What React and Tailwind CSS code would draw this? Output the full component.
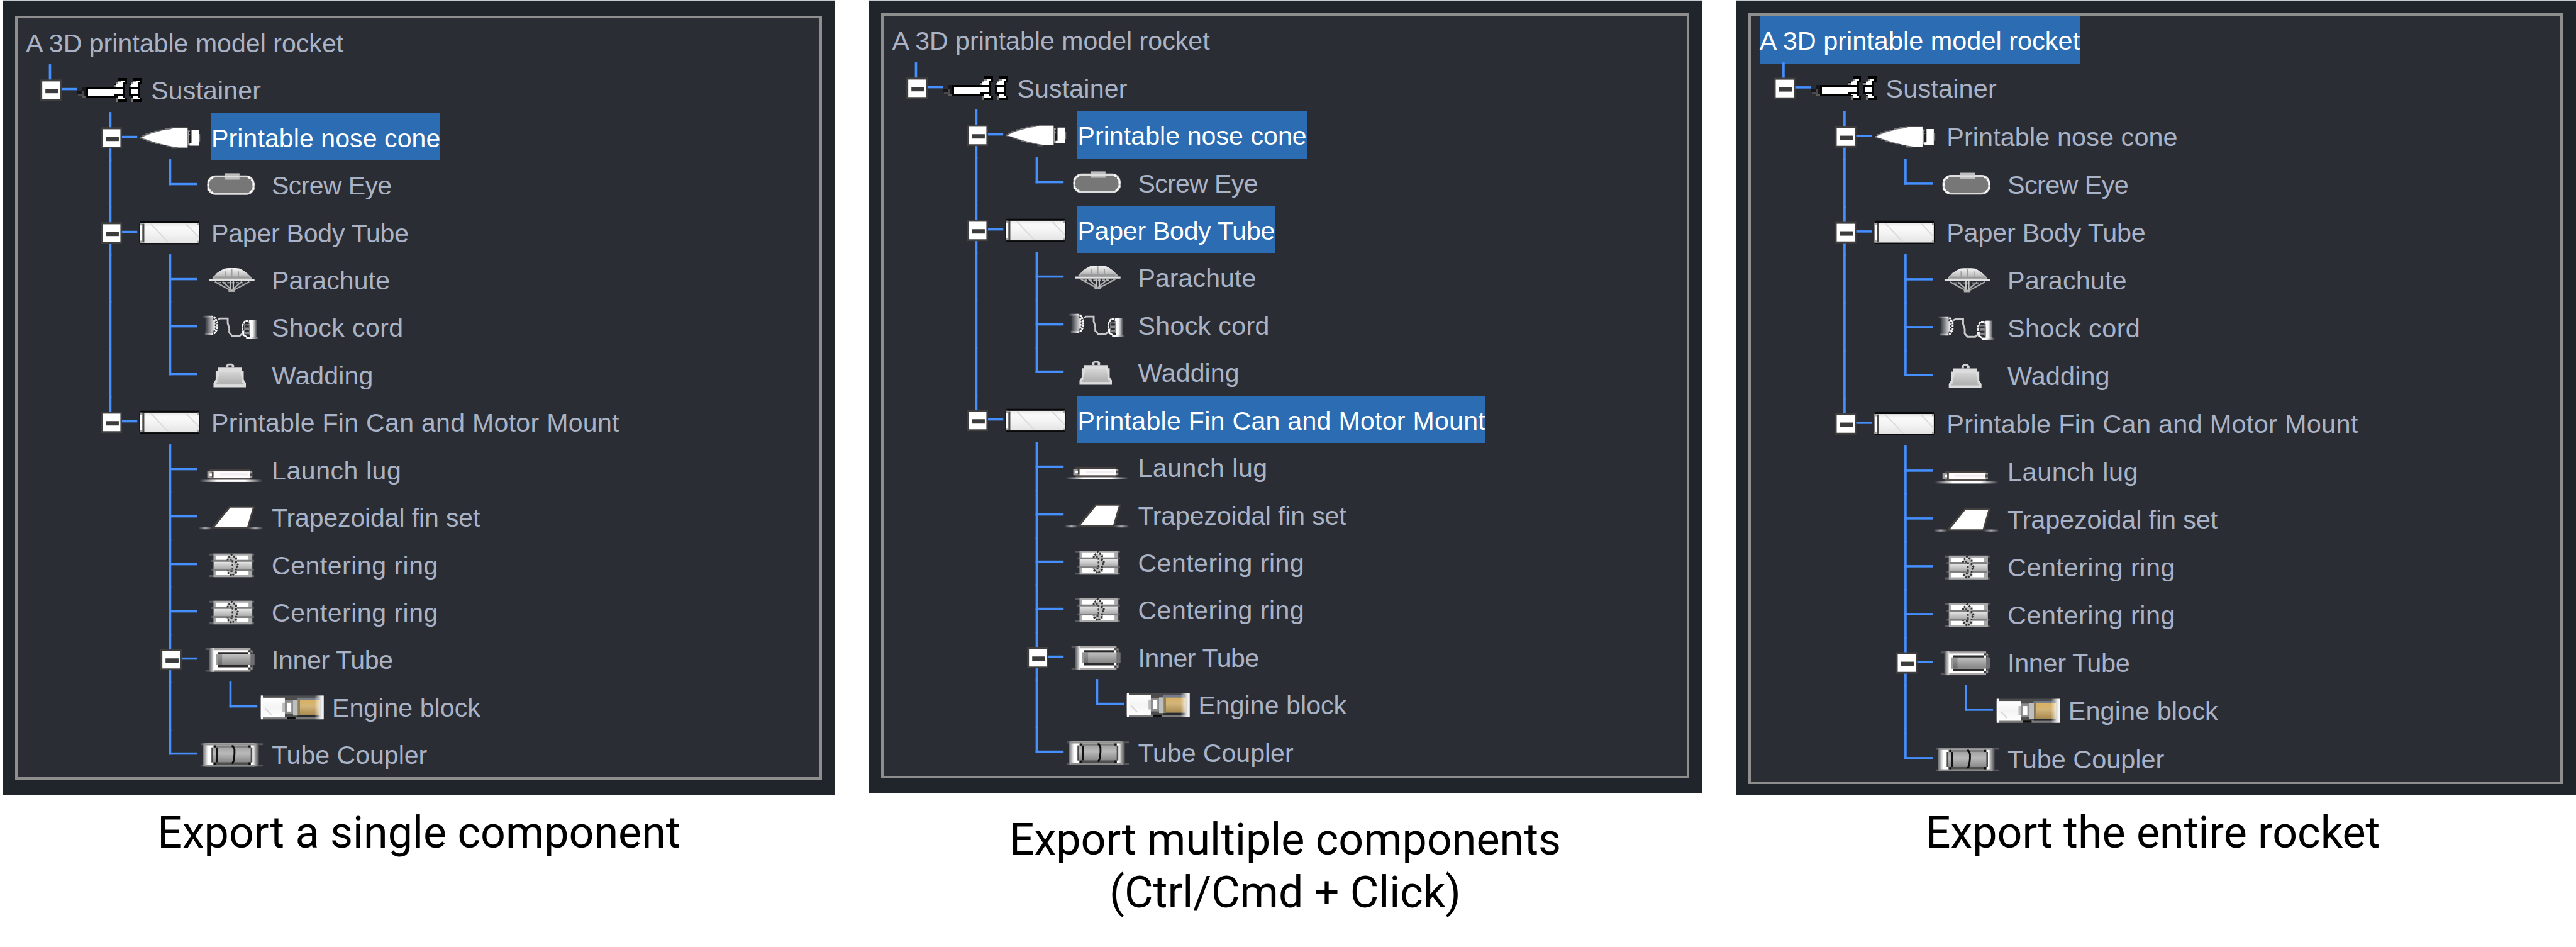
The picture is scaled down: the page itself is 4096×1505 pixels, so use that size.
import React from "react";

/* ---------- component icons ---------- */

function IconBox({ view, children }) {
  return (
    <svg viewBox={view} className="h-[79px] w-[113px] shrink-0 overflow-visible" aria-hidden="true">
      {children}
    </svg>
  );
}

function Fin() {
  return (
    <g shapeRendering="crispEdges">
      <path d="M231 60H273V92H262V104H253V147H262V157H273V179H231V168H221V147H210V138H253V104H210V92H221V82H231Z" fill="#000" />
      <path d="M231 72H242V82H231ZM221 82H231V92H221ZM210 94H221V104H210Z" fill="#8a8a8a" />
      <path d="M242 72H262V82H253V104H221V92H231V82H242Z" fill="#fff" />
      <path d="M221 147H253V157H262V168H242V157H231V152H221Z" fill="#fff" />
      <path d="M221 157H231V168H221ZM221 168H231V179H221Z" fill="#77736f" />
      <path d="M231 157H242V168H231Z" fill="#fff" />
    </g>
  );
}

function SustainerIcon() {
  return (
    <IconBox view="23 -3 339 237">
      <g shapeRendering="crispEdges">
        <path d="M25 124H47V104H69V147H58V139H25Z" fill="#15171a" />
        <path d="M47 124H58V147H47ZM30 139H47V147H30Z" fill="#4c4b4b" />
        <path d="M47 147H69V157H47Z" fill="#5d5a58" />
        <rect x="69" y="104" width="193" height="53" fill="#000" />
        <rect x="80" y="114" width="173" height="33" fill="#fff" />
      </g>
      <Fin />
      <g transform="translate(76 0)">
        <Fin />
      </g>
      <g shapeRendering="crispEdges">
        <rect x="200" y="114" width="53" height="24" fill="#fff" />
        <rect x="285" y="104" width="53" height="43" fill="#000" />
        <rect x="295" y="114" width="33" height="23" fill="#fff" />
      </g>
    </IconBox>
  );
}

function NoseConeIcon() {
  return (
    <IconBox view="324 234 339 237">
      <path d="M490 303H577V309H490ZM495 405H525V412H495Z" fill="#4d4b49" />
      <path d="M340 352H350V343H366V335H388V327H410V321H436V315H462V309H577V405H495V400H470V394H440V388H414V381H392V374H370V366H352V361H340Z" fill="#77787a" />
      <path d="M344 357L366 346L392 336L420 328L450 320L490 314L505 309H576V405H530L490 398L450 389L420 381L392 372L366 363Z" fill="#fff" />
      <rect x="577" y="320" width="10" height="74" fill="#9a9a9a" />
      <path d="M587 328V388" stroke="#1b1b1b" strokeWidth="9" strokeDasharray="10 6 44 6" />
      <path d="M596 318H632V396H586V384H596Z" fill="#fff" />
      <rect x="632" y="338" width="7" height="38" fill="#77787a" />
    </IconBox>
  );
}

function ScrewEyeIcon() {
  return (
    <IconBox view="625 471 339 237">
      <rect x="679" y="551" width="226" height="87" rx="36" fill="#777" stroke="#dedede" strokeWidth="10" />
      <path d="M679 620V575L705 553M879 553L905 578V615L880 636M705 636L684 618" fill="none" stroke="#fff" strokeWidth="9" strokeDasharray="12 9" />
      <rect x="760" y="535" width="75" height="32" fill="#bdbdbd" />
      <rect x="760" y="547" width="75" height="9" fill="#dedede" />
    </IconBox>
  );
}

function BodyTubeIcon() {
  return (
    <IconBox view="324 708 339 237">
      <defs>
        <linearGradient id="tubeShade" x1="0" y1="0" x2="0" y2="1">
          <stop offset="0" stopColor="#e6e6e6" />
          <stop offset="0.2" stopColor="#fafafa" />
          <stop offset="0.55" stopColor="#f3f3f3" />
          <stop offset="1" stopColor="#e4e4e4" />
        </linearGradient>
      </defs>
      <path d="M340 773H632V783H637V881H632V888H340V881H335V783H340Z" fill="#08090a" />
      <rect x="338" y="783" width="294" height="98" fill="url(#tubeShade)" />
      <path d="M392 785L480 879M568 785L631 852" stroke="#dadada" strokeWidth="6" />
      <rect x="340" y="794" width="10" height="76" fill="#fff" />
      <rect x="350" y="785" width="10" height="94" fill="#4a4a4a" />
      <path d="M338 783H348V794H338ZM338 870H348V881H338ZM623 783H632V793H623ZM623 871H632V881H623Z" fill="#a4a4a4" />
    </IconBox>
  );
}

function ParachuteIcon() {
  return (
    <IconBox view="25 -15 339 237">
      <defs>
        <linearGradient id="canopy" x1="0" y1="0" x2="0" y2="1">
          <stop offset="0" stopColor="#f4f4f4" />
          <stop offset="0.5" stopColor="#cfcfcf" />
          <stop offset="1" stopColor="#a3a3a3" />
        </linearGradient>
      </defs>
      <path d="M100 103V94L112 84L122 72L142 60L160 50L178 48H218L236 50L254 60L272 72L284 84L295 94V103Z" fill="url(#canopy)" />
      <path d="M166 96V64M197 96V52M230 96V64" stroke="#9d9d9d" strokeWidth="5" />
      <path d="M112 94H284" stroke="#9a9a9a" strokeWidth="8" />
      <path d="M84 103H310V113H84Z" fill="#e2e2e2" />
      <path d="M112 116L192 160M150 116L194 155M246 116L200 155M284 116L202 160" fill="none" stroke="#a9a9a9" strokeWidth="7" />
      <path d="M190 113V158M204 113V158" stroke="#c4c4c4" strokeWidth="7" />
      <path d="M130 121H265" stroke="#b8b8b8" strokeWidth="6" strokeDasharray="14 8" />
      <rect x="180" y="155" width="32" height="12" fill="#b0b0b0" />
    </IconBox>
  );
}

function ShockCordIcon() {
  return (
    <IconBox view="25 222 339 237">
      <defs>
        <linearGradient id="spoolLeft" x1="0" x2="1">
          <stop offset="0" stopColor="#fff" stopOpacity="0.05" />
          <stop offset="0.5" stopColor="#fff" stopOpacity="0.5" />
          <stop offset="1" stopColor="#fff" />
        </linearGradient>
        <linearGradient id="spoolRight" x1="0" x2="1">
          <stop offset="0" stopColor="#fff" />
          <stop offset="0.4" stopColor="#f2f2f2" />
          <stop offset="1" stopColor="#fff" stopOpacity="0.1" />
        </linearGradient>
      </defs>
      <path d="M52 287H104V297H52ZM62 372H104V382H62Z" fill="url(#spoolLeft)" />
      <path d="M64 297H105V307H115V362H105V372H64Z" fill="url(#spoolLeft)" />
      <path d="M105 302L116 318V352L104 378" fill="none" stroke="#3a3b40" strokeWidth="9" strokeDasharray="8 8" />
      <path d="M108 292L124 318V354L108 378" fill="none" stroke="#fff" strokeWidth="9" strokeDasharray="11 3" />
      <path d="M127 306L138 301H176V325L184 350V372L198 388H236L250 376" fill="none" stroke="#c9c9c9" strokeWidth="9" />
      <path d="M250 376V336L262 314H286V340" fill="none" stroke="#f2f2f2" strokeWidth="9" strokeDasharray="14 3" />
      <rect x="288" y="308" width="34" height="86" fill="url(#spoolRight)" />
      <rect x="258" y="330" width="30" height="54" fill="#85868a" />
      <path d="M272 336V384" stroke="#2a2b30" strokeWidth="20" strokeDasharray="10 12" />
      <path d="M254 362V384L270 392" fill="none" stroke="#fff" strokeWidth="8" />
      <rect x="268" y="392" width="62" height="12" fill="url(#spoolRight)" />
    </IconBox>
  );
}

function WaddingIcon() {
  return (
    <IconBox view="25 459 339 237">
      <defs>
        <linearGradient id="weight" x1="0" y1="0" x2="0" y2="1">
          <stop offset="0" stopColor="#d4d4d4" />
          <stop offset="1" stopColor="#b2b2b2" />
        </linearGradient>
      </defs>
      <path d="M168 545V532L178 524H198L208 532V545H196V533H180V545Z" fill="#d2d2d2" />
      <path d="M127 545H246V560H256V604L267 622V643H105V622L116 604V560H127Z" fill="#dcdcdc" />
      <path d="M136 566H238L248 606V622H124V606Z" fill="url(#weight)" />
      <rect x="116" y="620" width="140" height="9" fill="#b4b4b4" />
    </IconBox>
  );
}

function LaunchLugIcon() {
  return (
    <IconBox view="25 933 339 237">
      <defs>
        <linearGradient id="ground" x1="0" x2="1">
          <stop offset="0" stopColor="#fff" stopOpacity="0" />
          <stop offset="0.28" stopColor="#fff" />
          <stop offset="0.72" stopColor="#fff" />
          <stop offset="1" stopColor="#fff" stopOpacity="0" />
        </linearGradient>
      </defs>
      <rect x="85" y="1052" width="205" height="10" fill="#45413f" />
      <rect x="85" y="1094" width="205" height="10" fill="#55504d" />
      <rect x="74" y="1062" width="225" height="32" fill="#a29e9c" />
      <rect x="105" y="1062" width="182" height="32" fill="#fdfbfc" />
      <rect x="138" y="1072" width="140" height="10" fill="#f1edf0" />
      <path d="M84 1072H92V1084H84ZM96 1064H105V1092H96ZM287 1072H299V1084H287Z" fill="#4a4644" />
      <rect x="85" y="1072" width="12" height="12" fill="#fff" />
      <rect x="35" y="1104" width="316" height="11" fill="url(#ground)" />
    </IconBox>
  );
}

function FinSetIcon() {
  return (
    <IconBox view="25 1170 339 237">
      <defs>
        <linearGradient id="groundDim" x1="0" x2="1">
          <stop offset="0" stopColor="#fff" stopOpacity="0.05" />
          <stop offset="0.5" stopColor="#fff" stopOpacity="0.6" />
          <stop offset="1" stopColor="#fff" stopOpacity="0.1" />
        </linearGradient>
      </defs>
      <path d="M184 1237H310V1246L280 1350H98V1340Z" fill="#45413f" />
      <path d="M189 1245H301L273 1342H110Z" fill="#fff" />
      <rect x="32" y="1343" width="64" height="10" fill="url(#groundDim)" />
      <rect x="278" y="1343" width="72" height="10" fill="url(#groundDim)" />
    </IconBox>
  );
}

function CenteringRingIcon() {
  return (
    <IconBox view="25 -3 339 237">
      <defs>
        <linearGradient id="ringCore" x1="0" y1="0" x2="0" y2="1">
          <stop offset="0" stopColor="#e6e6e6" />
          <stop offset="1" stopColor="#aaa" />
        </linearGradient>
      </defs>
      <path d="M85 62H308V72H85ZM85 170H308V180H85Z" fill="#fff" fillOpacity="0.22" />
      <path d="M94 94H308V104H94ZM94 138H308V148H94Z" fill="#fff" fillOpacity="0.18" />
      <rect x="105" y="62" width="194" height="118" fill="#a9a9a9" />
      <path d="M116 72H280V94H116ZM116 148H280V170H116Z" fill="#fff" />
      <rect x="108" y="94" width="188" height="54" fill="#7d7d7d" />
      <rect x="108" y="103" width="188" height="36" fill="url(#ringCore)" />
      <path d="M183 96V86H214V158H183V148" fill="none" stroke="#bcbcbc" strokeWidth="17" />
      <path d="M176 96V86L197 67L218 86V108L230 120L218 132V154L197 174L176 156V146" fill="none" stroke="#333" strokeWidth="9" strokeDasharray="9 7" />
      <path d="M186 92H200V150H186" fill="none" stroke="#3a3a3a" strokeWidth="8" strokeDasharray="10 8" />
    </IconBox>
  );
}

function InnerTubeIcon() {
  return (
    <IconBox view="25 471 339 237">
      <defs>
        <linearGradient id="innerEdge" x1="0" x2="1">
          <stop offset="0" stopColor="#55565b" />
          <stop offset="1" stopColor="#e4e4e4" />
        </linearGradient>
        <linearGradient id="innerCore" x1="0" y1="0" x2="0" y2="1">
          <stop offset="0" stopColor="#c2c2c2" />
          <stop offset="0.5" stopColor="#a2a2a2" />
          <stop offset="1" stopColor="#848484" />
        </linearGradient>
      </defs>
      <rect x="65" y="537" width="30" height="10" fill="#54555a" />
      <rect x="65" y="645" width="30" height="10" fill="#54555a" />
      <rect x="92" y="537" width="198" height="118" fill="#aaa6a6" />
      <rect x="83" y="537" width="24" height="118" fill="url(#innerEdge)" />
      <rect x="290" y="548" width="10" height="96" fill="#9a9696" />
      <path d="M105 547H280V556H290V636H280V645H105Z" fill="#fff" />
      <path d="M127 557H278V568H127ZM127 622H278V633H127Z" fill="#2c2a2a" />
      <path d="M118 567H300V622H118Z" fill="url(#innerCore)" />
      <rect x="118" y="567" width="10" height="55" fill="#9a9a9a" />
      <rect x="127" y="567" width="21" height="55" fill="#000" fillOpacity="0.2" />
      <rect x="290" y="567" width="20" height="55" fill="#6f7074" />
      <path d="M280 547H290V557H280ZM290 557H298V567H290ZM280 633H290V643H280ZM290 622H298V632H290Z" fill="#3a3838" />
    </IconBox>
  );
}

function EngineBlockIcon() {
  return (
    <IconBox view="327 708 339 237">
      <defs>
        <linearGradient id="motor" x1="0" y1="0" x2="0" y2="1">
          <stop offset="0" stopColor="#d9b160" />
          <stop offset="0.4" stopColor="#d2b57a" />
          <stop offset="1" stopColor="#a8894f" />
        </linearGradient>
        <linearGradient id="blockFade" x1="0" x2="1">
          <stop offset="0" stopColor="#fff" stopOpacity="0" />
          <stop offset="0.7" stopColor="#fff" stopOpacity="0.85" />
          <stop offset="1" stopColor="#fff" />
        </linearGradient>
        <linearGradient id="blockPaper" x1="0" y1="0" x2="0" y2="1">
          <stop offset="0" stopColor="#fff" />
          <stop offset="0.5" stopColor="#f4f4f4" />
          <stop offset="1" stopColor="#fff" />
        </linearGradient>
      </defs>
      <rect x="342" y="772" width="314" height="119" fill="#4e4d4d" />
      <rect x="352" y="880" width="290" height="11" fill="#7c7c7c" />
      <rect x="342" y="783" width="120" height="98" fill="url(#blockPaper)" />
      <path d="M342 772H352V891H342Z" fill="#fff" />
      <path d="M364 836L394 868" stroke="#d4d4d4" strokeWidth="6" />
      <rect x="450" y="808" width="12" height="46" fill="#bbb" />
      <rect x="462" y="796" width="42" height="68" fill="#8b8b8b" />
      <rect x="472" y="808" width="22" height="44" fill="#fff" />
      <rect x="525" y="783" width="100" height="13" fill="#757c8c" />
      <rect x="525" y="870" width="110" height="11" fill="#262a31" />
      <rect x="503" y="794" width="24" height="78" fill="#bec0c0" />
      <rect x="527" y="794" width="10" height="78" fill="#8c7f60" />
      <rect x="537" y="795" width="100" height="75" fill="url(#motor)" />
      <rect x="473" y="880" width="42" height="11" fill="#0c0c0c" />
      <rect x="610" y="772" width="46" height="119" fill="url(#blockFade)" />
    </IconBox>
  );
}

function TubeCouplerIcon() {
  return (
    <IconBox view="25 945 339 237">
      <defs>
        <linearGradient id="couplerLeft" x1="0" x2="1">
          <stop offset="0" stopColor="#6a6b6f" />
          <stop offset="1" stopColor="#fff" />
        </linearGradient>
        <linearGradient id="couplerRight" x1="0" x2="1">
          <stop offset="0" stopColor="#fff" />
          <stop offset="0.5" stopColor="#909090" />
          <stop offset="1" stopColor="#4b4c50" />
        </linearGradient>
        <linearGradient id="couplerCore" x1="0" y1="0" x2="0" y2="1">
          <stop offset="0" stopColor="#a2a2a2" />
          <stop offset="0.4" stopColor="#bababa" />
          <stop offset="1" stopColor="#888" />
        </linearGradient>
      </defs>
      <path d="M42 1012H352V1021H42ZM42 1119H352V1128H42Z" fill="#fff" fillOpacity="0.2" />
      <rect x="52" y="1012" width="26" height="116" fill="url(#couplerLeft)" />
      <rect x="75" y="1012" width="232" height="116" fill="#fff" />
      <rect x="302" y="1012" width="30" height="116" fill="url(#couplerRight)" />
      <rect x="62" y="1012" width="252" height="10" fill="#8f8f8f" />
      <rect x="62" y="1118" width="252" height="10" fill="#8a8a8a" />
      <rect x="104" y="1022" width="188" height="96" fill="#7b7b7b" />
      <rect x="95" y="1032" width="204" height="75" fill="url(#couplerCore)" />
      <rect x="104" y="1107" width="188" height="11" fill="#4e4e4e" />
      <path d="M99 1032V1107M295 1032V1107" stroke="#4a4a4a" strokeWidth="8" />
      <path d="M112 1022V1032M112 1108V1118M121 1032V1107" stroke="#111" strokeWidth="9" />
      <path d="M196 1026H202L210 1042V1066L206 1100L198 1114" fill="none" stroke="#0c0c0c" strokeWidth="9" />
      <path d="M280 1022H290V1032H280ZM280 1107H290V1118H280Z" fill="#111" />
    </IconBox>
  );
}

/* ---------- tree ---------- */

// rails: which ancestor levels still have siblings below this row
const ROWS = [
  { id: "root", depth: 0, label: "A 3D printable model rocket", tracking: "tracking-[0.03px]" },
  { id: "sustainer", depth: 1, label: "Sustainer", tracking: "tracking-[0.18px]", Icon: SustainerIcon, open: true, last: true, rails: [] },
  { id: "nose", depth: 2, label: "Printable nose cone", tracking: "tracking-[0.08px]", Icon: NoseConeIcon, open: true, rails: [false] },
  { id: "screw", depth: 3, label: "Screw Eye", tracking: "tracking-[-0.66px]", Icon: ScrewEyeIcon, last: true, rails: [false, true] },
  { id: "body", depth: 2, label: "Paper Body Tube", tracking: "tracking-[-0.25px]", Icon: BodyTubeIcon, open: true, rails: [false] },
  { id: "chute", depth: 3, label: "Parachute", tracking: "tracking-[0.11px]", Icon: ParachuteIcon, rails: [false, true] },
  { id: "cord", depth: 3, label: "Shock cord", tracking: "tracking-[0.43px]", Icon: ShockCordIcon, rails: [false, true] },
  { id: "wadding", depth: 3, label: "Wadding", tracking: "tracking-[0.13px]", Icon: WaddingIcon, last: true, rails: [false, true] },
  { id: "fincan", depth: 2, label: "Printable Fin Can and Motor Mount", tracking: "tracking-[0.31px]", Icon: BodyTubeIcon, open: true, last: true, rails: [false] },
  { id: "lug", depth: 3, label: "Launch lug", tracking: "tracking-[0.57px]", Icon: LaunchLugIcon, rails: [false, false] },
  { id: "fins", depth: 3, label: "Trapezoidal fin set", tracking: "tracking-[-0.15px]", Icon: FinSetIcon, rails: [false, false] },
  { id: "ring1", depth: 3, label: "Centering ring", tracking: "tracking-[0.52px]", Icon: CenteringRingIcon, rails: [false, false] },
  { id: "ring2", depth: 3, label: "Centering ring", tracking: "tracking-[0.52px]", Icon: CenteringRingIcon, rails: [false, false] },
  { id: "inner", depth: 3, label: "Inner Tube", tracking: "tracking-[-0.38px]", Icon: InnerTubeIcon, open: true, rails: [false, false] },
  { id: "block", depth: 4, label: "Engine block", tracking: "tracking-[0.07px]", Icon: EngineBlockIcon, last: true, rails: [false, false, true] },
  { id: "coupler", depth: 3, label: "Tube Coupler", tracking: "tracking-[0px]", Icon: TubeCouplerIcon, last: true, rails: [false, false] },
];

function Rail({ visible }) {
  return (
    <svg viewBox="0 0 100.5 79" className="h-[79px] w-[100.5px] shrink-0 overflow-visible" aria-hidden="true">
      {visible && <rect x="52" y="-2" width="3.8" height="81.5" fill="#458fff" />}
    </svg>
  );
}

function Branch({ open, last }) {
  return (
    <svg viewBox="0 0 99 79" className="h-[79px] w-[99px] shrink-0 overflow-visible" aria-hidden="true">
      <rect x="52" y="-2" width="3.8" height={last ? 43.2 : 81.5} fill="#458fff" />
      <rect x="52" y="37.5" width="46.7" height="3.7" fill="#458fff" />
      {open && (
        <g>
          <rect x="37.7" y="23.3" width="35.6" height="35.5" fill="#403f3e" />
          <rect x="41" y="26.6" width="29.6" height="29.2" fill="#fff" />
          <rect x="46.3" y="39" width="21.7" height="7.3" fill="#3c3c3c" />
        </g>
      )}
    </svg>
  );
}

function Row({ row, selected }) {
  const { depth, label, tracking, Icon, open, last, rails = [] } = row;
  return (
    <li className="flex h-[79px]">
      {rails.map((visible, i) => (
        <Rail key={i} visible={visible} />
      ))}
      {depth > 0 && <Branch open={open} last={last} />}
      {Icon && <Icon />}
      <span
        className={[
          "block h-[79px] text-[43px] leading-[84.4px] whitespace-nowrap",
          depth > 0 ? "ml-[10.7px]" : "ml-[14.3px]",
          selected ? "bg-[#2b6cb2] text-white" : "text-[#a9b3c5]",
          tracking,
        ].join(" ")}
      >
        {label}
      </span>
    </li>
  );
}

function Tree({ selected }) {
  return (
    <ul className="font-['Liberation_Sans',Arial,sans-serif]">
      {ROWS.map((row) => (
        <Row key={row.id} row={row} selected={selected.includes(row.id)} />
      ))}
    </ul>
  );
}

/* ---------- page ---------- */

export default function App() {
  return (
    <div className="h-[1576px] w-[4290px] overflow-hidden bg-white [zoom:0.95478]">
      <main className="flex items-start pl-[4px] text-center font-[Roboto,sans-serif] text-[73.3px] leading-[88px] text-black">
        <section className="w-[1387px]">
          <div className="h-[1.1px] bg-[#c6cccd]" />
          <div className="h-[1321.6px] bg-[#20252c] pt-[25px] pr-[22px] pl-[20.7px]">
            <div className="h-[1272px] border-[4.2px] border-[#8e8e8f] bg-[#2b2d35]">
              <Tree selected={["nose"]} />
            </div>
          </div>
          <p className="mt-[19.2px]">Export a single component</p>
        </section>

        <section className="ml-[55.5px] w-[1387.5px]">
          <div className="h-[1.1px] bg-[#c6cccd]" />
          <div className="h-[1318.6px] bg-[#20252c] pt-[21.3px] pr-[21px] pl-[20.8px]">
            <div className="h-[1272.7px] border-[4.2px] border-[#8e8e8f] bg-[#2b2d35]">
              <Tree selected={["nose", "body", "fincan"]} />
            </div>
          </div>
          <p className="mt-[33.5px]">
            Export multiple components
            <br />
            (Ctrl/Cmd + Click)
          </p>
        </section>

        <section className="ml-[56.5px] w-[1399.5px]">
          <div className="h-[1.1px] bg-[#c6cccd]" />
          <div className="h-[1321.6px] bg-[#20252c] pt-[21.3px] pr-[22px] pl-[21.2px]">
            <div className="h-[1283px] border-[4.2px] border-[#8e8e8f] bg-[#2b2d35]">
              <div className="[zoom:1.0087]">
                <Tree selected={["root"]} />
              </div>
            </div>
          </div>
          <p className="mt-[19.2px] mr-[10px]">Export the entire rocket</p>
        </section>
      </main>
    </div>
  );
}
